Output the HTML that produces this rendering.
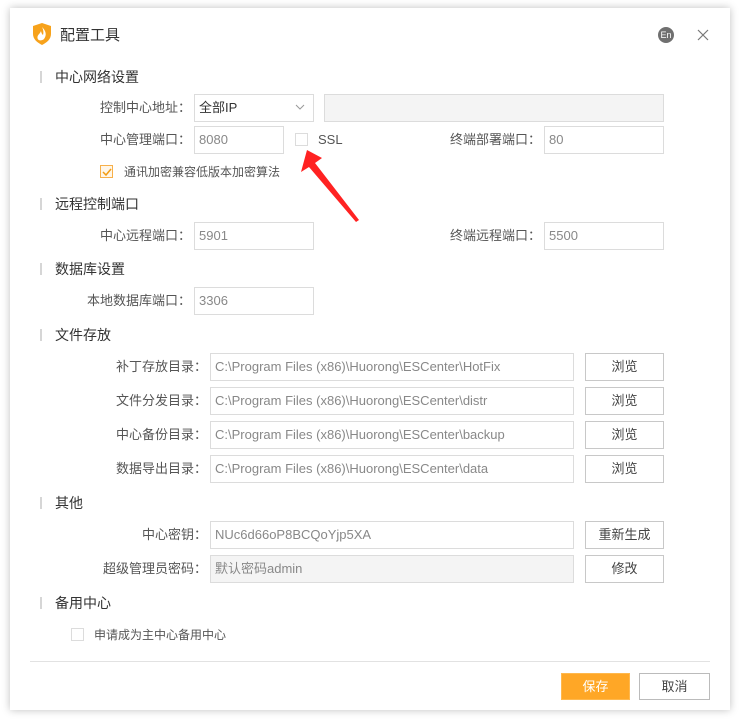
<!DOCTYPE html>
<html><head><meta charset="utf-8"><style>
*{box-sizing:border-box;margin:0;padding:0}
body{width:740px;height:720px;background:#fff;position:relative;overflow:hidden;font-family:"Liberation Sans","Noto Sans CJK SC",sans-serif;}
.dlg{position:absolute;left:10px;top:8px;width:720px;height:702px;background:#fff;box-shadow:0 0 8px rgba(0,0,0,.25)}
.a{position:absolute;white-space:nowrap}
.h{font-size:14px;color:#333;line-height:16px}
.bar{position:absolute;left:40px;width:2px;height:12px;background:#d6d6d6}
.l{font-size:13px;color:#555;line-height:16px;text-align:right}
.in{position:absolute;height:28px;border:1px solid #dcdcdc;font-size:13px;color:#888;line-height:26px;padding-left:4px;background:#fff}
.dis{background:#f4f4f4}
.btn{position:absolute;height:28px;border:1px solid #c8c8c8;font-size:13px;color:#444;line-height:26px;text-align:center;background:#fff}
.cb{position:absolute;width:13px;height:13px;border:1px solid #dcdcdc;background:#fff}
</style></head><body>
<div class="dlg"></div>
<svg class="a" style="left:32px;top:23px" width="20" height="22" viewBox="0 0 20 22"><path d="M1 3 L10 0 L19 3 L19 11 C19 16 15 19.5 10 22 C5 19.5 1 16 1 11Z" fill="#f7a21b"/><path d="M10 4 C14 8 15 12 12 16 C10 18 6 18 5.5 15 C5 12 8 11 9 8 C9.5 11 11 12 11 12 C12 9 11 6 10 4Z" fill="#fff"/></svg>
<div class="a" style="left:60px;top:27px;font-size:15px;color:#333;line-height:18px">配置工具</div>
<div class="a" style="left:658px;top:27px;width:16px;height:16px;border-radius:50%;background:#707070;color:#fff;font-size:9px;line-height:16px;text-align:center">En</div>
<svg class="a" style="left:697px;top:29px" width="12" height="12"><path d="M1 1L11 11M11 1L1 11" stroke="#777" stroke-width="1.2"/></svg>

<div class="bar" style="top:71px"></div><div class="a h" style="left:55px;top:69px">中心网络设置</div>
<div class="a l" style="right:549px;top:100px">控制中心地址：</div>
<div class="in" style="left:194px;top:94px;width:120px;color:#333">全部IP</div>
<svg class="a" style="left:295px;top:104px" width="10" height="7"><path d="M1 1L5 5L9 1" stroke="#999" fill="none"/></svg>
<div class="in dis" style="left:324px;top:94px;width:340px"></div>
<div class="a l" style="right:549px;top:132px">中心管理端口：</div>
<div class="in" style="left:194px;top:126px;width:90px">8080</div>
<div class="cb" style="left:295px;top:133px"></div>
<div class="a" style="left:318px;top:132px;font-size:13px;color:#555;line-height:16px">SSL</div>
<div class="a l" style="right:199px;top:132px">终端部署端口：</div>
<div class="in" style="left:544px;top:126px;width:120px">80</div>
<div class="cb" style="left:100px;top:165px;border-color:#f7b04a;background:#fff6e8"></div>
<svg class="a" style="left:102px;top:167px" width="10" height="10"><path d="M1 5L4 8L9 2" stroke="#f39c12" stroke-width="1.5" fill="none"/></svg>
<div class="a l" style="left:124px;top:164px;text-align:left;font-size:12px">通讯加密兼容低版本加密算法</div>
<svg class="a" style="left:0;top:0" width="740" height="720"><polygon points="307,150 301,172 309,167 356,222 359,220 315,163 322,158" fill="#f22"/></svg>

<div class="bar" style="top:198px"></div><div class="a h" style="left:55px;top:196px">远程控制端口</div>
<div class="a l" style="right:549px;top:228px">中心远程端口：</div>
<div class="in" style="left:194px;top:222px;width:120px">5901</div>
<div class="a l" style="right:199px;top:228px">终端远程端口：</div>
<div class="in" style="left:544px;top:222px;width:120px">5500</div>

<div class="bar" style="top:263px"></div><div class="a h" style="left:55px;top:261px">数据库设置</div>
<div class="a l" style="right:549px;top:293px">本地数据库端口：</div>
<div class="in" style="left:194px;top:287px;width:120px">3306</div>

<div class="bar" style="top:329px"></div><div class="a h" style="left:55px;top:327px">文件存放</div>
<div class="a l" style="right:533px;top:359px">补丁存放目录：</div>
<div class="in" style="left:210px;top:353px;width:364px">C:\Program Files (x86)\Huorong\ESCenter\HotFix</div>
<div class="btn" style="left:585px;top:353px;width:79px">浏览</div>
<div class="a l" style="right:533px;top:393px">文件分发目录：</div>
<div class="in" style="left:210px;top:387px;width:364px">C:\Program Files (x86)\Huorong\ESCenter\distr</div>
<div class="btn" style="left:585px;top:387px;width:79px">浏览</div>
<div class="a l" style="right:533px;top:427px">中心备份目录：</div>
<div class="in" style="left:210px;top:421px;width:364px">C:\Program Files (x86)\Huorong\ESCenter\backup</div>
<div class="btn" style="left:585px;top:421px;width:79px">浏览</div>
<div class="a l" style="right:533px;top:461px">数据导出目录：</div>
<div class="in" style="left:210px;top:455px;width:364px">C:\Program Files (x86)\Huorong\ESCenter\data</div>
<div class="btn" style="left:585px;top:455px;width:79px">浏览</div>

<div class="bar" style="top:497px"></div><div class="a h" style="left:55px;top:495px">其他</div>
<div class="a l" style="right:533px;top:527px">中心密钥：</div>
<div class="in" style="left:210px;top:521px;width:364px">NUc6d66oP8BCQoYjp5XA</div>
<div class="btn" style="left:585px;top:521px;width:79px">重新生成</div>
<div class="a l" style="right:533px;top:561px">超级管理员密码：</div>
<div class="in dis" style="left:210px;top:555px;width:364px">默认密码admin</div>
<div class="btn" style="left:585px;top:555px;width:79px">修改</div>

<div class="bar" style="top:597px"></div><div class="a h" style="left:55px;top:595px">备用中心</div>
<div class="cb" style="left:71px;top:628px"></div>
<div class="a l" style="left:94px;top:627px;text-align:left;font-size:12px">申请成为主中心备用中心</div>

<div class="a" style="left:30px;top:661px;width:680px;height:1px;background:#e2e2e2"></div>
<div class="btn" style="left:561px;top:673px;width:69px;height:27px;background:#ffa726;border-color:#ffb84d;color:#fff">保存</div>
<div class="btn" style="left:639px;top:673px;width:71px;height:27px;border-color:#bbb">取消</div>
</body></html>
